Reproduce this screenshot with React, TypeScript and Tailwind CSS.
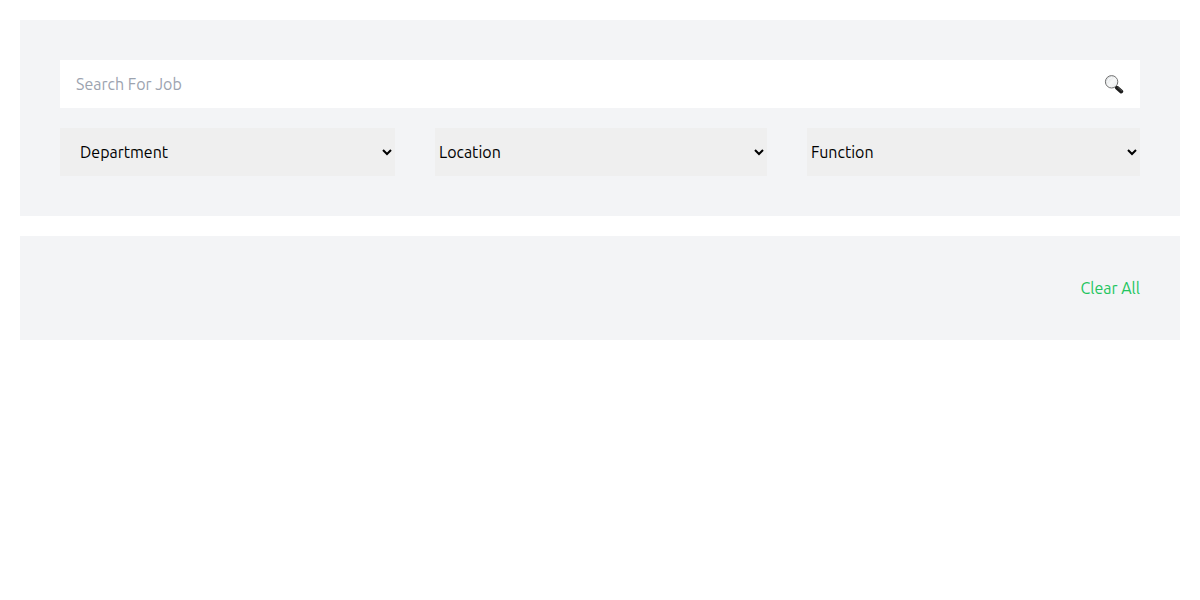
import { useState } from "react"

const filters = [
  { name: "Department", className: "pl-4" },
  { name: "Location", className: "pl-0" },
  { name: "Function", className: "pl-0" },
]

function SearchIcon() {
  return (
    <svg viewBox="0 0 20 20" className="size-5" aria-hidden="true">
      <defs>
        <linearGradient id="lens" x1="0" y1="0" x2="1" y2="1">
          <stop offset="0" stopColor="#cdd2d5" />
          <stop offset="0.5" stopColor="#f7f8f8" />
          <stop offset="1" stopColor="#e6e8ea" />
        </linearGradient>
      </defs>
      <path d="M11.4 12l1.6 1.6" stroke="#888" strokeWidth="1.4" />
      <path d="M13 13.8l4.2 3.6" stroke="#1c1c1c" strokeWidth="4" strokeLinecap="round" />
      <path d="M13.8 13.4l3.8 3.4" stroke="#666" strokeWidth="0.8" strokeLinecap="round" />
      <circle cx="7.6" cy="7.8" r="6.2" fill="url(#lens)" stroke="#737373" strokeWidth="1" />
      <path d="M3.6 7.4a4.2 4.2 0 0 1 3.8-3.8" fill="none" stroke="#fff" strokeWidth="0.9" strokeLinecap="round" />
    </svg>
  )
}

export default function App() {
  const [search, setSearch] = useState("")
  const [values, setValues] = useState<Record<string, string>>({})

  return (
    <main className="p-5 flex flex-col gap-5 text-base font-['Ubuntu','Noto_Sans',sans-serif]">
      <section className="bg-gray-100 p-10 flex flex-col gap-5">
        <div className="flex items-center h-12 px-4 bg-white">
          <input
            type="text"
            aria-label="Search For Job"
            placeholder="Search For Job"
            value={search}
            onChange={(e) => setSearch(e.target.value)}
            className="flex-1 min-w-0 outline-none placeholder:text-[#9ca3af]"
          />
          <button aria-label="Search"><SearchIcon /></button>
        </div>
        <div className="grid grid-cols-[335fr_332fr_333fr] gap-10">
          {filters.map(({ name, className }) => (
            <select
              key={name}
              aria-label={name}
              value={values[name] ?? ""}
              onChange={(e) => setValues({ ...values, [name]: e.target.value })}
              className={`${className} w-full min-w-0 h-12 bg-[#efefef] text-black`}
            >
              <option value="">{name}</option>
            </select>
          ))}
        </div>
      </section>
      <section className="bg-gray-100 p-10 flex justify-end">
        <button
          className="text-[#22c55e]"
          onClick={() => {
            setSearch("")
            setValues({})
          }}
        >
          Clear All
        </button>
      </section>
    </main>
  )
}
